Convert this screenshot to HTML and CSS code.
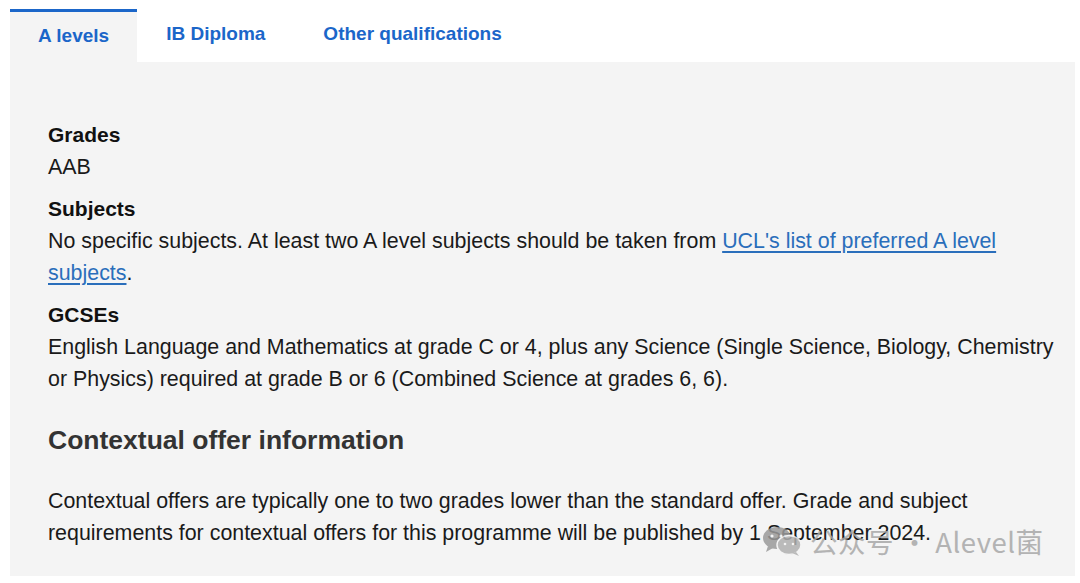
FILE: index.html
```html
<!DOCTYPE html>
<html>
<head>
<meta charset="utf-8">
<link rel="stylesheet" href="styles.css">
</head>
<body>
<div class="page">
  <nav class="tabs">
    <a class="tab active">A levels</a>
    <a class="tab">IB Diploma</a>
    <a class="tab">Other qualifications</a>
  </nav>
  <section class="panel">
    <dl class="reqs">
      <div class="req">
        <dt>Grades</dt>
        <dd>AAB</dd>
      </div>
      <div class="req">
        <dt>Subjects</dt>
        <dd>No specific subjects. At least two A level subjects should be taken from <a class="link">UCL's list of preferred A level subjects</a>.</dd>
      </div>
      <div class="req">
        <dt>GCSEs</dt>
        <dd>English Language and Mathematics at grade C or 4, plus any Science (Single Science, Biology, Chemistry or Physics) required at grade B or 6 (Combined Science at grades 6, 6).</dd>
      </div>
    </dl>
    <h2 class="sub-heading">Contextual offer information</h2>
    <p class="para">Contextual offers are typically one to two grades lower than the standard offer. Grade and subject requirements for contextual offers for this programme will be published by 1 September 2024.</p>
  </section>
  <div class="watermark">
    <svg class="wm-icon" width="40" height="30" viewBox="0 0 40 30">
      <ellipse cx="15" cy="12" rx="14" ry="11" fill="#9a9a9a"/>
      <path d="M6 20 L4 26 L11 22 Z" fill="#9a9a9a"/>
      <ellipse cx="27" cy="19" rx="12" ry="9.5" fill="#b0b0b0" stroke="#f4f4f4" stroke-width="1.5"/>
      <path d="M34 26 L37 30 L30 27 Z" fill="#b0b0b0"/>
      <circle cx="10" cy="10" r="1.6" fill="#f4f4f4"/>
      <circle cx="19" cy="10" r="1.6" fill="#f4f4f4"/>
      <circle cx="23" cy="18" r="1.3" fill="#f4f4f4"/>
      <circle cx="31" cy="18" r="1.3" fill="#f4f4f4"/>
    </svg>
    <span class="wm-text">公众号 · Alevel菌</span>
  </div>
</div>
</body>
</html>
```

FILE: styles.css
```css
html, body {
  margin: 0;
  padding: 0;
  background: #ffffff;
}

.page {
  position: relative;
  width: 1080px;
  height: 583px;
  padding: 9px 5px 0 10px;
  box-sizing: border-box;
  font-family: "Liberation Sans", Arial, sans-serif;
}

.tabs {
  display: flex;
  align-items: flex-start;
  height: 53px;
}

.tab {
  display: block;
  padding: 13px 29px 0 29px;
  font-size: 19px;
  font-weight: bold;
  line-height: 24px;
  color: #1b66c9;
  text-decoration: none;
}

.tab.active {
  border-top: 3px solid #1b66c9;
  padding: 12px 28px 0 28px;
  height: 38px;
  background: #f4f4f4;
}

.panel {
  background: #f4f4f4;
  height: 514px;
  padding: 57px 10px 0 38px;
  box-sizing: border-box;
}

.reqs {
  margin: 0;
  display: flex;
  flex-direction: column;
  gap: 10px;
}

.req dt {
  font-size: 21px;
  font-weight: bold;
  line-height: 32px;
  color: #111;
}

.req dd {
  margin: 0;
  font-size: 21.4px;
  line-height: 32px;
  color: #1a1a1a;
}

.link {
  color: #2a6ebb;
  text-decoration: underline;
  text-underline-offset: 3px;
}

.sub-heading {
  margin: 27px 0 0 0;
  font-size: 26.5px;
  line-height: 36px;
  font-weight: bold;
  color: #333333;
}

.para {
  margin: 27px 0 0 0;
  font-size: 21.4px;
  line-height: 32px;
  color: #1a1a1a;
  max-width: 960px;
}

.watermark {
  position: absolute;
  left: 762px;
  top: 521px;
  display: flex;
  align-items: center;
  gap: 8px;
  opacity: 0.85;
}

.wm-text {
  font-family: "Noto Sans CJK SC", "Noto Sans", sans-serif;
  font-size: 27.5px;
  color: #a8a8a8;
  letter-spacing: 0.5px;
}
```
